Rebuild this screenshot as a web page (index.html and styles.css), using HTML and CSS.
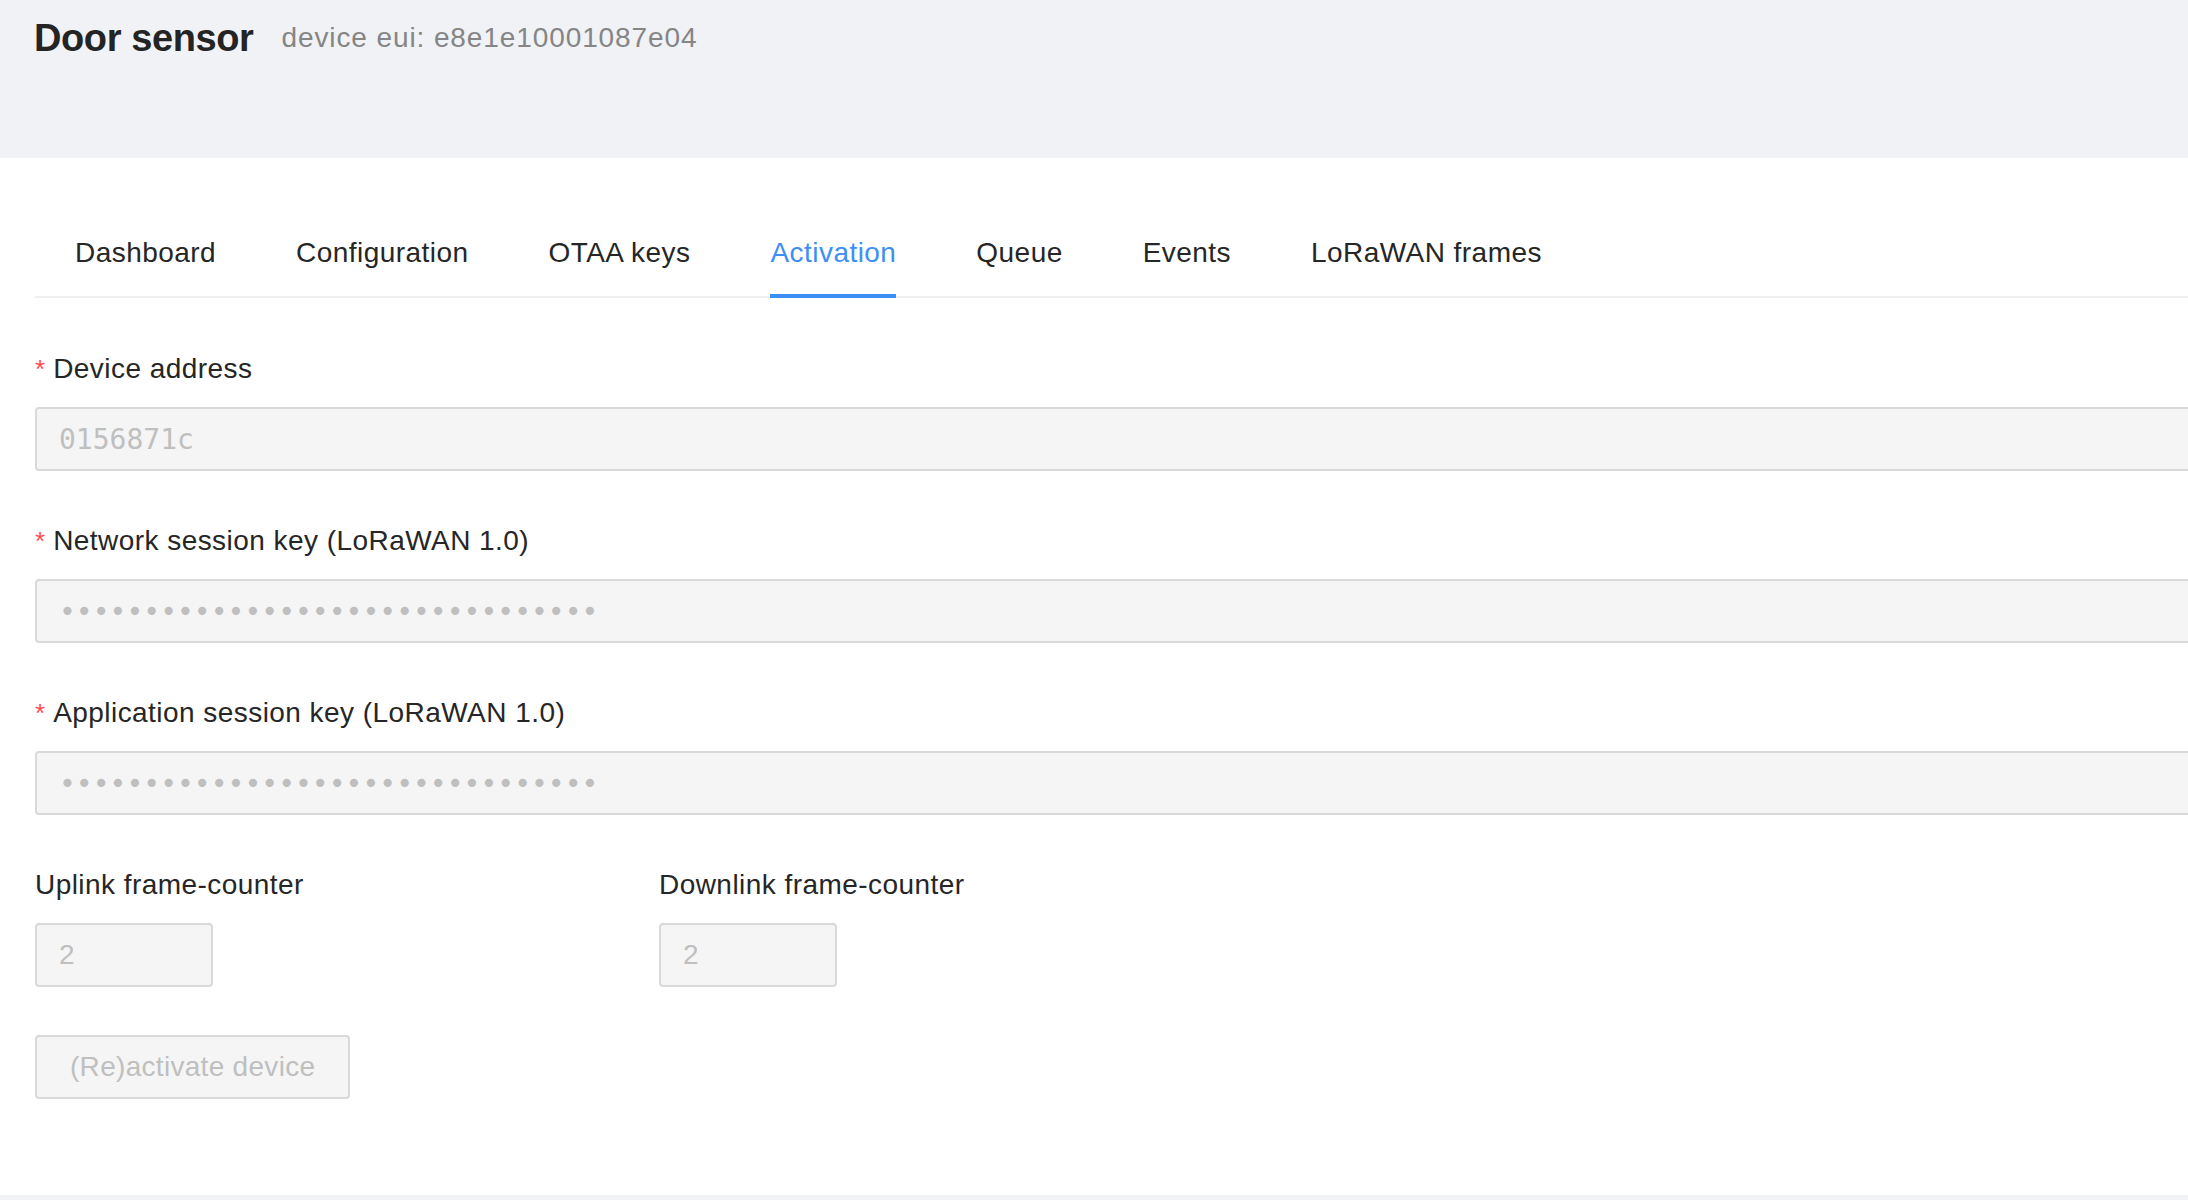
FILE: index.html
```html
<!DOCTYPE html>
<html lang="en">
<head>
<meta charset="utf-8">
<title>Door sensor</title>
<link rel="stylesheet" href="styles.css">
</head>
<body>
<header class="page-header">
  <h1 class="title">Door sensor</h1>
  <span class="subtitle">device eui: e8e1e10001087e04</span>
</header>
<main class="card">
  <nav class="tabs">
    <a class="tab">Dashboard</a>
    <a class="tab">Configuration</a>
    <a class="tab">OTAA keys</a>
    <a class="tab active">Activation</a>
    <a class="tab">Queue</a>
    <a class="tab">Events</a>
    <a class="tab">LoRaWAN frames</a>
  </nav>
  <form class="form">
    <div class="item">
      <label class="label required">Device address</label>
      <input class="input mono" type="text" value="0156871c" disabled>
    </div>
    <div class="item">
      <label class="label required">Network session key (LoRaWAN 1.0)</label>
      <input class="input mono" type="password" value="00000000000000000000000000000000" disabled>
    </div>
    <div class="item">
      <label class="label required">Application session key (LoRaWAN 1.0)</label>
      <input class="input mono" type="password" value="00000000000000000000000000000000" disabled>
    </div>
    <div class="row">
      <div class="item">
        <label class="label">Uplink frame-counter</label>
        <input class="input small" type="text" value="2" disabled>
      </div>
      <div class="item">
        <label class="label">Downlink frame-counter</label>
        <input class="input small" type="text" value="2" disabled>
      </div>
    </div>
    <div class="item">
      <button class="btn" type="button" disabled>(Re)activate device</button>
    </div>
  </form>
</main>
</body>
</html>
```
FILE: styles.css
```css
html, body {
  margin: 0;
  padding: 0;
  overflow: hidden;
}
body {
  background: #f0f2f5;
  font-family: "Liberation Sans", Arial, sans-serif;
  color: #262626;
  height: 1200px;
}
.page-header {
  box-sizing: border-box;
  height: 158px;
  padding: 6px 0 0 34px;
  display: flex;
  align-items: flex-start;
}
.title {
  margin: 0 28px 0 0;
  height: 64px;
  line-height: 64px;
  font-size: 38px;
  font-weight: 700;
  letter-spacing: -0.4px;
  color: #242424;
}
.subtitle {
  height: 64px;
  line-height: 64px;
  font-size: 28px;
  letter-spacing: 0.9px;
  color: #858585;
}
.card {
  box-sizing: border-box;
  height: 1037px;
  background: #fff;
  padding: 47px 0 0 35px;
  overflow: hidden;
}
.tabs {
  display: flex;
  border-bottom: 2px solid #f0f0f0;
}
.tab {
  position: relative;
  padding: 26px 40px 21px;
  font-size: 28px;
  line-height: 44px;
  letter-spacing: 0.45px;
  color: #262626;
  white-space: nowrap;
}
.tab.active {
  color: #3d8ff5;
}
.tab.active::after {
  content: "";
  position: absolute;
  left: 40px;
  right: 40px;
  bottom: -2px;
  height: 4px;
  background: #3d8ff5;
}
.form {
  width: 2400px;
  margin-top: 49px;
}
.item {
  margin-bottom: 48px;
}
.label {
  display: block;
  font-size: 28px;
  line-height: 44px;
  padding-bottom: 16px;
  letter-spacing: 0.45px;
  color: #262626;
}
.label.required::before {
  content: "*";
  margin-right: 8px;
  color: #ff4d4f;
  font-size: 26px;
  letter-spacing: 0;
}
.input {
  display: block;
  box-sizing: border-box;
  width: 100%;
  height: 64px;
  margin: 0;
  padding: 0 22px;
  border: 2px solid #d9d9d9;
  border-radius: 4px;
  background: #f5f5f5;
  color: #bfbfbf;
  -webkit-text-fill-color: #bfbfbf;
  font-family: "Liberation Sans", Arial, sans-serif;
  font-size: 28px;
  outline: none;
  opacity: 1;
}
.input.mono {
  font-family: "DejaVu Sans Mono", "Liberation Mono", monospace;
  font-size: 28px;
}
.input.small {
  width: 178px;
}
.row {
  display: grid;
  grid-template-columns: 624px 624px;
}
.btn {
  box-sizing: border-box;
  height: 64px;
  padding: 0 33px;
  border: 2px solid #d9d9d9;
  border-radius: 4px;
  background: #f5f5f5;
  color: #bfbfbf;
  font-family: "Liberation Sans", Arial, sans-serif;
  font-size: 28px;
  letter-spacing: 0.3px;
}
```
